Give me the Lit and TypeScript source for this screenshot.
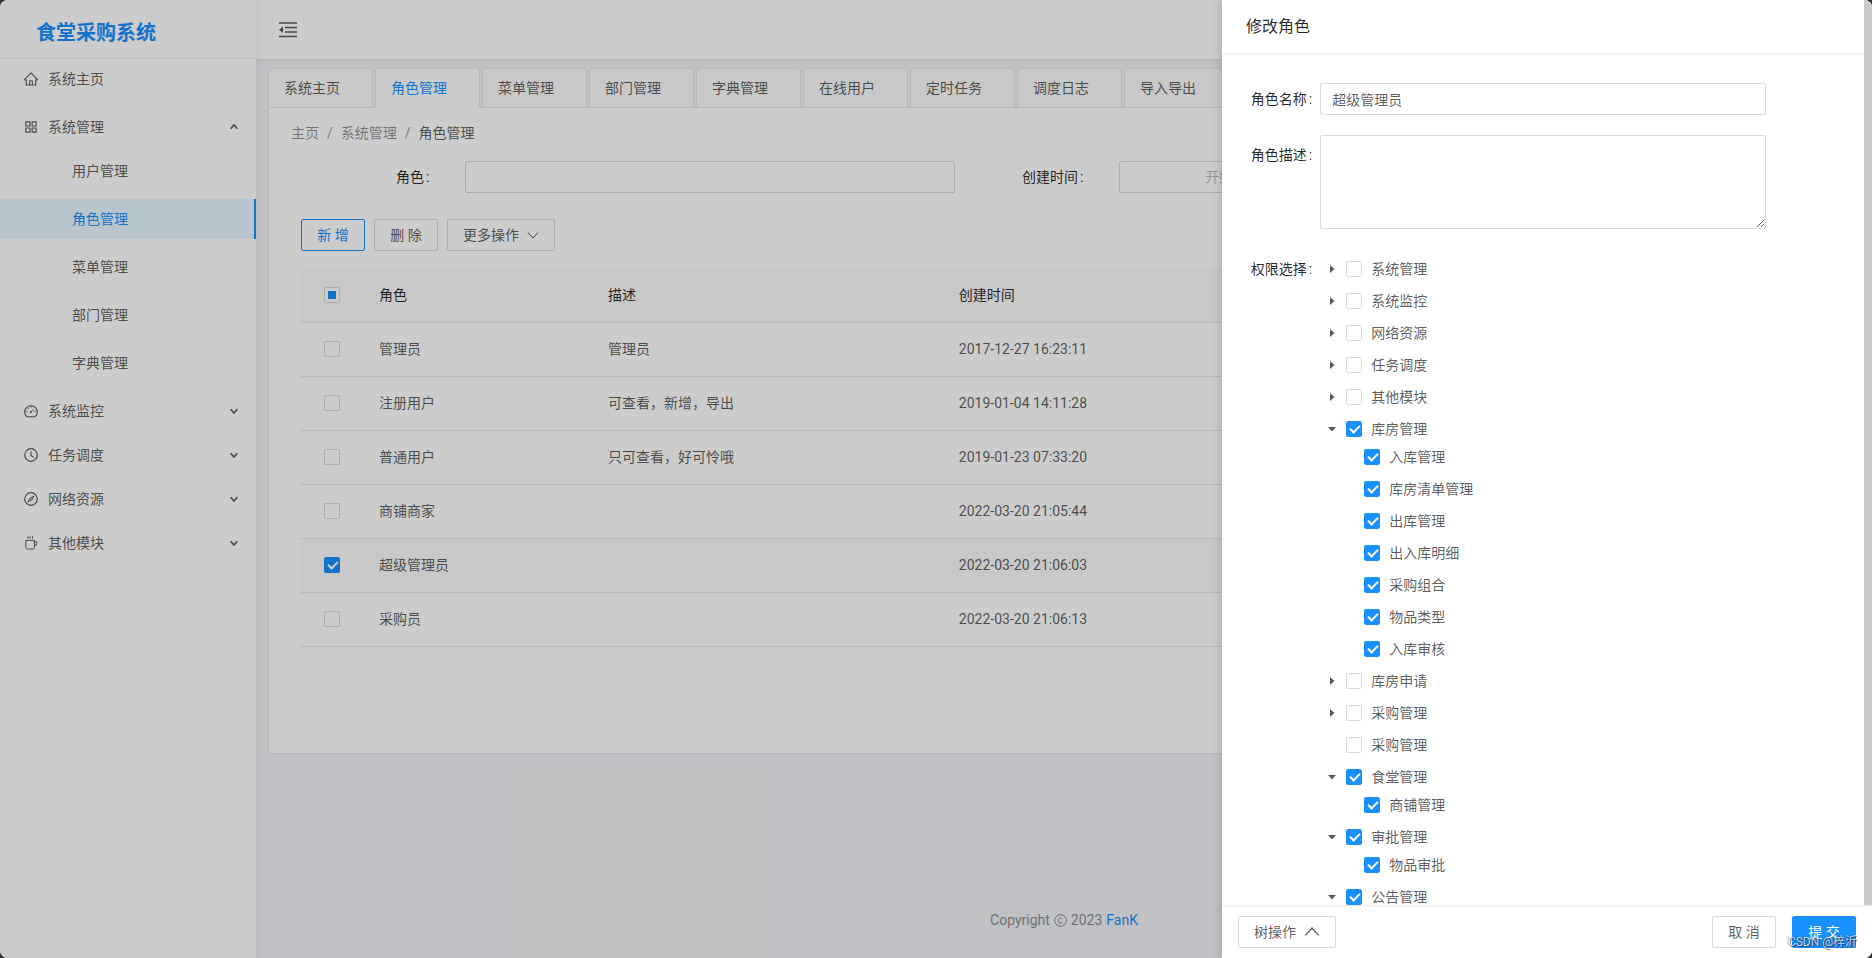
import { LitElement, html, css, svg, nothing } from "lit";
import { customElement, state } from "lit/decorators.js";
import { classMap } from "lit/directives/class-map.js";

const icons: Record<string, unknown> = {
  home: svg`<path fill="currentColor" d="M946.5 505L534.2 92.9a31.5 31.5 0 0 0-44.4 0L77.5 505a63.9 63.9 0 0 0-18.8 46c.4 35.2 29.7 63.3 64.9 63.3h42.5V940h691.8V614.3h43.4c17.1 0 33.2-6.7 45.3-18.8a63.6 63.6 0 0 0 18.7-45.3c0-17-6.7-33.1-18.8-45.2zM568 868H456V664h112v204zm217.9-325.7V868H632V640c0-22.1-17.9-40-40-40H432c-22.1 0-40 17.9-40 40v228H238.1V542.3h-96l370-369.7L882 542.3h-96.1z"/>`,
  appstore: svg`<path fill="none" stroke="currentColor" stroke-width="72" stroke-linejoin="round" d="M176 176h268v268H176zM580 176h268v268H580zM176 580h268v268H176zM580 580h268v268H580z"/>`,
  dashboard: svg`<path fill="none" stroke="currentColor" stroke-width="72" stroke-linejoin="round" d="M236 884A412 412 0 1 1 788 884Z"/><path fill="none" stroke="currentColor" stroke-width="60" d="M512 200v90M200 540h90M734 540h90M290 318l62 62M500 590l190-200"/><circle cx="495" cy="596" r="62" fill="currentColor"/>`,
  clock: svg`<circle cx="512" cy="512" r="410" fill="none" stroke="currentColor" stroke-width="76"/><path fill="none" stroke="currentColor" stroke-width="68" d="M512 270v270l168 122"/>`,
  compass: svg`<circle cx="512" cy="512" r="410" fill="none" stroke="currentColor" stroke-width="76"/><path fill="none" stroke="currentColor" stroke-width="60" stroke-linejoin="round" d="M706 318L572 572 318 706 452 452Z"/><circle cx="512" cy="512" r="50" fill="currentColor"/>`,
  coffee: svg`<path fill="none" stroke="currentColor" stroke-width="64" d="M312 70v160M462 70v160M612 70v160M176 344h556v460q0 100-100 100H276q-100 0-100-100zM732 430h112q50 0 50 50v80q0 110-162 130"/>`,
};

const icon = (name: string) =>
  html`<svg class="icon" viewBox="56 56 912 912" aria-hidden="true">${icons[name]}</svg>`;

const chevron = (cls: string) =>
  html`<svg class=${cls} viewBox="0 0 12 12" aria-hidden="true"><path d="M1 3.5L6 9l5-5.5" fill="none" stroke="currentColor" /></svg>`;

interface TreeNode {
  title: string;
  checked?: boolean;
  leaf?: boolean;
  children?: string[];
}

const systemChildren = ["用户管理", "角色管理", "菜单管理", "部门管理", "字典管理"];
const groups: [string, string][] = [
  ["dashboard", "系统监控"],
  ["clock", "任务调度"],
  ["compass", "网络资源"],
  ["coffee", "其他模块"],
];
const tabs = ["系统主页", "角色管理", "菜单管理", "部门管理", "字典管理", "在线用户", "定时任务", "调度日志", "导入导出"];
const rows = [
  ["管理员", "管理员", "2017-12-27 16:23:11"],
  ["注册用户", "可查看，新增，导出", "2019-01-04 14:11:28"],
  ["普通用户", "只可查看，好可怜哦", "2019-01-23 07:33:20"],
  ["商铺商家", "", "2022-03-20 21:05:44"],
  ["超级管理员", "", "2022-03-20 21:06:03"],
  ["采购员", "", "2022-03-20 21:06:13"],
];
const tree: TreeNode[] = [
  { title: "系统管理" },
  { title: "系统监控" },
  { title: "网络资源" },
  { title: "任务调度" },
  { title: "其他模块" },
  {
    title: "库房管理",
    checked: true,
    children: ["入库管理", "库房清单管理", "出库管理", "出入库明细", "采购组合", "物品类型", "入库审核"],
  },
  { title: "库房申请" },
  { title: "采购管理" },
  { title: "采购管理", leaf: true },
  { title: "食堂管理", checked: true, children: ["商铺管理"] },
  { title: "审批管理", checked: true, children: ["物品审批"] },
  { title: "公告管理", checked: true, children: [] },
];

const shared = css`
  *, *::before, *::after { box-sizing: border-box; }
  button, input, textarea { font: inherit; color: inherit; margin: 0; }
  a { color: inherit; text-decoration: none; }
  .btn {
    height: 32px;
    min-width: 64px;
    padding: 0 15px;
    display: inline-flex;
    align-items: center;
    justify-content: center;
    gap: 8px;
    border: 1px solid #d9d9d9;
    border-radius: 2px;
    background: #fff;
    white-space: pre;
    cursor: pointer;
  }
  .btn.primary { background: #1890ff; border-color: #1890ff; color: #fff; }
  .btn.ghost { border-color: #1890ff; color: #1890ff; }
  .control {
    height: 32px;
    width: 100%;
    padding: 4px 11px;
    border: 1px solid #d9d9d9;
    border-radius: 2px;
    background: #fff;
    outline: none;
  }
  .colon::after { content: ":"; margin-left: 2px; }
  .check {
    appearance: none;
    flex: none;
    display: block;
    position: relative;
    width: 16px;
    height: 16px;
    border: 1px solid #d9d9d9;
    border-radius: 2px;
    background: #fff;
    cursor: pointer;
  }
  .check:checked { background: #1890ff; border-color: #1890ff; }
  .check:checked::after {
    content: "";
    position: absolute;
    left: 5px;
    top: 1px;
    width: 6px;
    height: 10px;
    border: solid #fff;
    border-width: 0 2px 2px 0;
    transform: rotate(45deg);
  }
  .check:indeterminate::after {
    content: "";
    position: absolute;
    inset: 3px;
    background: #1890ff;
  }
`;

@customElement("side-menu")
class SideMenu extends LitElement {
  static styles = [
    shared,
    css`
      :host {
        display: block;
        width: 256px;
        flex: none;
        background: #fff;
        box-shadow: 2px 0 8px rgba(29, 35, 41, 0.06);
        z-index: 2;
      }
      .logo {
        height: 59px;
        padding: 8px 36px 0;
        display: flex;
        align-items: center;
        border-bottom: 1px solid #f0f0f0;
        color: #1890ff;
        font-size: 20px;
        font-weight: 700;
        margin: 0;
      }
      .menu { display: flex; flex-direction: column; gap: 4px; }
      .item {
        height: 40px;
        padding: 0 18px 0 24px;
        display: flex;
        align-items: center;
        gap: 10px;
        width: 100%;
        border: 0;
        background: none;
        text-align: left;
        cursor: pointer;
      }
      .first { margin-bottom: 4px; }
      .icon { width: 14px; height: 14px; flex: none; }
      .grow { flex: 1; }
      .arrow { width: 8px; height: 8px; stroke-width: 2.4; }
      .up { transform: rotate(180deg); }
      .sub { display: flex; flex-direction: column; gap: 8px; padding-bottom: 4px; }
      .leaf { height: 40px; padding-left: 72px; display: flex; align-items: center; }
      .leaf.active { background: #e6f7ff; color: #1890ff; border-right: 2px solid #1890ff; }
    `,
  ];

  render() {
    return html`
      <h1 class="logo">食堂采购系统</h1>
      <nav class="menu">
        <a class="item first" href="#home">${icon("home")}<span class="grow">系统主页</span></a>
        <button class="item">${icon("appstore")}<span class="grow">系统管理</span>${chevron("arrow up")}</button>
        <div class="sub">
          ${systemChildren.map(
            (t) => html`<a href="#system" class=${classMap({ leaf: true, active: t === "角色管理" })}>${t}</a>`
          )}
        </div>
        ${groups.map(
          ([i, t]) => html`<button class="item">${icon(i)}<span class="grow">${t}</span>${chevron("arrow")}</button>`
        )}
      </nav>
    `;
  }
}

@customElement("role-page")
class RolePage extends LitElement {
  @state() private selected = new Set(["超级管理员"]);

  static styles = [
    shared,
    css`
      :host { display: block; padding: 9px 12px 0; }
      .tabs { box-shadow: inset 0 -1px #e8e8e8; padding-bottom: 1px; display: flex; gap: 2px; overflow: hidden; }
      .tab {
        flex: none;
        width: 105px;
        height: 39px;
        padding: 0 15px;
        display: flex;
        align-items: center;
        justify-content: space-between;
        border: 1px solid #e8e8e8;
        border-bottom: 0;
        border-radius: 4px 4px 0 0;
        background: #fafafa;
      }
      .tab.active { background: #fff; color: #1890ff; box-shadow: 0 1px #fff; }
      .tab .name { border: 0; background: none; padding: 0; }
      .close { border: 0; background: none; padding: 0; width: 10px; height: 10px; color: #fff; display: flex; }
      .close svg { width: 10px; height: 10px; }
      .card {
        background: #fff;
        border: 1px solid #e8e8e8;
        border-top: 0;
        padding: 14px 32px 106px;
      }
      .crumbs { display: flex; gap: 8px; line-height: 22px; margin-left: -10px; color: rgba(0, 0, 0, 0.45); }
      .crumbs .here { color: rgba(0, 0, 0, 0.65); }
      .search { display: grid; grid-template-columns: 3fr 3fr 1fr; padding: 17px 0 26px; }
      .field { display: grid; grid-template-columns: 1fr 3fr; align-items: center; }
      .field > label { text-align: right; padding-right: 35px; color: rgba(0, 0, 0, 0.85); }
      .range { display: flex; align-items: center; justify-content: space-between; }
      .range input { width: 44%; border: 0; outline: 0; padding: 0; background: none; text-align: center; }
      .range input::placeholder { color: #bfbfbf; }
      .actions { display: flex; gap: 9px; padding-bottom: 17px; }
      .caret { width: 12px; height: 12px; }
      table { width: 100%; border-collapse: collapse; table-layout: fixed; text-align: left; }
      th, td { height: 54px; padding: 0 16px; border-bottom: 1px solid #e8e8e8; font-weight: 400; }
      th { background: #fafafa; color: rgba(0, 0, 0, 0.85); }
      tr.on td { background: #fafafa; }
      .c-check { width: 62px; }
      .c-check .check { margin: 0 auto; }
      .c-role { width: 15%; }
      .c-desc { width: 23%; }
    `,
  ];

  private toggle(name: string) {
    const next = new Set(this.selected);
    next.has(name) ? next.delete(name) : next.add(name);
    this.selected = next;
  }

  render() {
    const all = this.selected.size === rows.length;
    return html`
      <div class="tabs">
        ${tabs.map(
          (t) => html`<div class=${classMap({ tab: true, active: t === "角色管理" })}>
            <button class="name">${t}</button>
            <button class="close" aria-label="关闭">
              <svg viewBox="0 0 10 10"><path d="M1.5 1.5l7 7m0-7l-7 7" stroke="currentColor" fill="none" /></svg>
            </button>
          </div>`
        )}
      </div>
      <section class="card">
        <nav class="crumbs">
          <a href="#home">主页</a><span>/</span><a href="#system">系统管理</a><span>/</span><span class="here">角色管理</span>
        </nav>
        <form class="search">
          <div class="field">
            <label class="colon" for="role">角色</label>
            <input class="control" id="role" />
          </div>
          <div class="field">
            <label class="colon" for="from">创建时间</label>
            <div class="control range">
              <input id="from" placeholder="开始日期" /><span>~</span>
              <input aria-label="结束日期" placeholder="结束日期" />
            </div>
          </div>
        </form>
        <div class="actions">
          <button class="btn ghost">新 增</button>
          <button class="btn">删 除</button>
          <button class="btn">更多操作${chevron("caret")}</button>
        </div>
        <table>
          <thead>
            <tr>
              <th class="c-check">
                <input class="check" type="checkbox" aria-label="全选" .checked=${all}
                  .indeterminate=${!all && this.selected.size > 0} />
              </th>
              <th class="c-role">角色</th>
              <th class="c-desc">描述</th>
              <th>创建时间</th>
            </tr>
          </thead>
          <tbody>
            ${rows.map(
              ([name, desc, time]) => html`<tr class=${classMap({ on: this.selected.has(name) })}>
                <td class="c-check">
                  <input class="check" type="checkbox" aria-label=${name} .checked=${this.selected.has(name)}
                    @change=${() => this.toggle(name)} />
                </td>
                <td>${name}</td>
                <td>${desc}</td>
                <td>${time}</td>
              </tr>`
            )}
          </tbody>
        </table>
      </section>
    `;
  }
}

@customElement("role-drawer")
class RoleDrawer extends LitElement {
  @state() private closed = new Set<number>();

  static styles = [
    shared,
    css`
      :host {
        display: flex;
        flex-direction: column;
        background: #fff;
        box-shadow: -2px 0 8px rgba(0, 0, 0, 0.15);
      }
      .scroll { flex: 1; min-height: 0; overflow-y: auto; scrollbar-width: none; border-right: 8px solid #ccc; }
      h2 {
        margin: 0;
        padding: 16px 24px;
        font-size: 16px;
        line-height: 22px;
        font-weight: 400;
        color: rgba(0, 0, 0, 0.85);
        border-bottom: 1px solid #e8e8e8;
      }
      .form { padding: 28px 24px 60px; display: grid; grid-template-columns: 3fr 18fr 3fr; row-gap: 20px; }
      .label { grid-column: 1; white-space: nowrap; text-align: right; padding-right: 8px; color: rgba(0, 0, 0, 0.85); line-height: 32px; }
      .label.low { line-height: 40px; }
      .label.mid { padding-top: 4px; }
      .form > .control, .tree { grid-column: 2; }
      .area { height: 94px; resize: vertical; display: block; }
      .tree { list-style: none; margin: 0; padding: 8px 0 0; display: flex; flex-direction: column; gap: 8px; line-height: 24px; }
      .row { display: flex; align-items: center; }
      .toggle { width: 24px; height: 24px; padding: 0; border: 0; background: none; display: flex; align-items: center; justify-content: center; cursor: pointer; }
      .toggle svg { width: 8px; height: 8px; }
      .toggle.right svg { transform: rotate(-90deg); }
      .node { display: flex; align-items: center; gap: 9px; padding-left: 2px; cursor: pointer; }
      .kids { list-style: none; margin: 0; padding: 4px 0 0 42px; display: flex; flex-direction: column; gap: 8px; }
      footer {
        display: flex;
        gap: 16px;
        padding: 10px 16px;
        border-top: 1px solid #e8e8e8;
        background: #fff;
      }
      .push { margin-right: auto; }
      .caret { width: 16px; height: 16px; transform: rotate(180deg); stroke-width: 1; }
    `,
  ];

  private flip(i: number) {
    const next = new Set(this.closed);
    next.has(i) ? next.delete(i) : next.add(i);
    this.closed = next;
  }

  private node(title: string, checked = false) {
    return html`<label class="node"><input class="check" type="checkbox" .checked=${checked} /><span>${title}</span></label>`;
  }

  render() {
    return html`
      <div class="scroll">
        <h2>修改角色</h2>
        <form class="form">
          <label class="label colon" for="name">角色名称</label>
          <input class="control" id="name" .value=${"超级管理员"} />
          <label class="label low colon" for="desc">角色描述</label>
          <textarea class="control area" id="desc"></textarea>
          <span class="label mid colon" id="perm">权限选择</span>
          <ul class="tree" aria-labelledby="perm">
            ${tree.map((n, i) => {
              const open = !!n.children && !this.closed.has(i);
              return html`<li>
                <div class="row">
                  ${n.leaf
                    ? html`<span class="toggle"></span>`
                    : html`<button type="button" aria-label="展开" class=${classMap({ toggle: true, right: !open })}
                        @click=${() => this.flip(i)}>
                        <svg viewBox="0 0 8 8"><path d="M0 2h8L4 6.5z" fill="currentColor" /></svg>
                      </button>`}
                  ${this.node(n.title, n.checked)}
                </div>
                ${open && n.children!.length
                  ? html`<ul class="kids">${n.children!.map((c) => html`<li>${this.node(c, true)}</li>`)}</ul>`
                  : nothing}
              </li>`;
            })}
          </ul>
        </form>
      </div>
      <footer>
        <button class="btn push">树操作${chevron("caret")}</button>
        <button class="btn">取 消</button>
        <button class="btn primary">提 交</button>
      </footer>
    `;
  }
}

@customElement("app-root")
class AppRoot extends LitElement {
  static styles = [
    shared,
    css`
      :host {
        display: block;
        background: #333;
        font-family: Roboto, "Noto Sans CJK SC", sans-serif;
        font-size: 14px;
        line-height: 22px;
        color: rgba(0, 0, 0, 0.65);
      }
      .frame {
        position: relative;
        display: flex;
        height: 100vh;
        overflow: hidden;
        border-radius: 8px;
        background: #f0f2f5;
      }
      .main { flex: 1; min-width: 0; display: flex; flex-direction: column; }
      .top {
        height: 59px;
        flex: none;
        padding: 0 23px;
        display: flex;
        align-items: center;
        background: #fff;
        box-shadow: 0 1px 4px rgba(0, 21, 41, 0.08);
      }
      .fold { border: 0; padding: 0; background: none; display: flex; cursor: pointer; }
      .fold svg { width: 18px; height: 18px; }
      .foot {
        margin-top: auto;
        padding: 0 0 27px;
        display: flex;
        justify-content: center;
        align-items: center;
        gap: 4px;
        color: rgba(0, 0, 0, 0.45);
      }
      .foot a { color: #1890ff; }
      .foot svg { width: 13px; height: 13px; }
      .mask { position: absolute; inset: 0; background: rgba(0, 0, 0, 0.2); z-index: 3; }
      .drawer { position: absolute; top: 0; right: 0; bottom: 0; width: 650px; z-index: 4; }
      .mark {
        position: absolute;
        right: 15px;
        bottom: 6px;
        z-index: 5;
        font-size: 12px;
        line-height: 20px;
        color: rgba(255, 255, 255, 0.75);
        text-shadow: 1px 1px 1px rgba(0, 0, 0, 0.6), -1px 0 1px rgba(0, 0, 0, 0.35);
        pointer-events: none;
      }
    `,
  ];

  render() {
    return html`
      <div class="frame">
        <side-menu></side-menu>
        <div class="main">
          <header class="top">
            <button class="fold" aria-label="收起菜单">
              <svg viewBox="0 0 18 18">
                <path d="M0 2h18M6 6.5h12M6 11h12M0 15.5h18" stroke="currentColor" stroke-width="1.6" fill="none" />
                <path d="M0 8.8L4 5.6v6.4z" fill="currentColor" />
              </svg>
            </button>
          </header>
          <role-page></role-page>
          <footer class="foot">
            <span>Copyright</span>
            <svg viewBox="0 0 14 14" fill="none" stroke="currentColor">
              <circle cx="7" cy="7" r="6.3" /><path d="M9 5.3A2.4 2.4 0 0 0 7 4.1C5.6 4.1 4.8 5.3 4.8 7S5.6 9.9 7 9.9A2.4 2.4 0 0 0 9 8.7" />
            </svg>
            <span>2023</span><a href="#fank">FanK</a>
          </footer>
        </div>
        <div class="mask"></div>
        <role-drawer class="drawer"></role-drawer>
        <span class="mark">CSDN @梓沂</span>
      </div>
    `;
  }
}
